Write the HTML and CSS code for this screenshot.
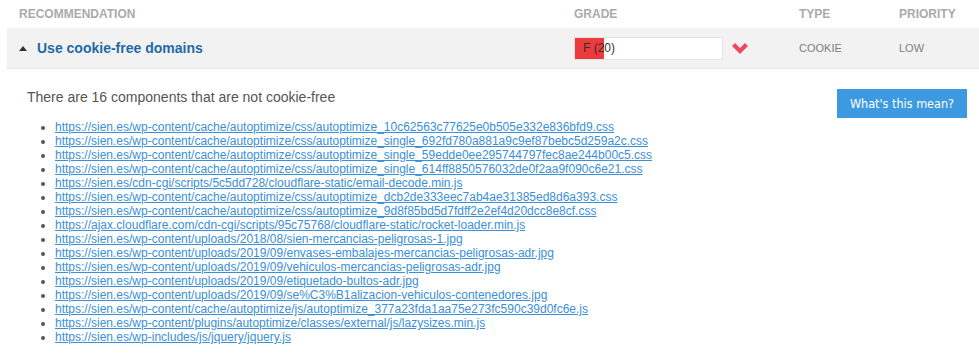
FILE: index.html
```html
<!DOCTYPE html>
<html lang="en">
<head>
  <meta charset="UTF-8" />
  <title>Recommendations</title>
  <link rel="stylesheet" href="styles.css">
</head>
<body>

<table class="recs">
  <thead>
    <tr>
      <th class="col-name">Recommendation</th>
      <th class="col-grade">Grade</th>
      <th class="col-type">Type</th>
      <th class="col-priority">Priority</th>
    </tr>
  </thead>
  <tbody>
    <tr class="rec-row">
      <td class="name-cell"><svg class="caret" width="8" height="5" viewBox="0 0 8 5"><path d="M0 5 L4 0 L8 5 Z" fill="#333"/></svg><span class="rec-title">Use cookie-free domains</span></td>
      <td>
        <div class="grade-wrap">
          <div class="grade-box">
            <div class="grade-fill" style="width: 20%"></div>
            <span class="grade-text">F (20)</span>
          </div>
          <svg class="chevron" width="16" height="11" viewBox="0 0 16 11">
            <path d="M0 3 L3 0 L8 5 L13 0 L16 3 L8 11 Z" fill="#ec4a60"/>
          </svg>
        </div>
      </td>
      <td class="small">COOKIE</td>
      <td class="small">LOW</td>
    </tr>
    <tr class="detail-row">
      <td colspan="4">
        <div class="detail">
          <div class="detail-head">
            <p class="summary">There are 16 components that are not cookie-free</p>
            <a class="btn" href="#">What's this mean?</a>
          </div>
          <ul class="links">
            <li><a href="#">https://sien.es/wp-content/cache/autoptimize/css/autoptimize_10c62563c77625e0b505e332e836bfd9.css</a></li>
            <li><a href="#">https://sien.es/wp-content/cache/autoptimize/css/autoptimize_single_692fd780a881a9c9ef87bebc5d259a2c.css</a></li>
            <li><a href="#">https://sien.es/wp-content/cache/autoptimize/css/autoptimize_single_59edde0ee295744797fec8ae244b00c5.css</a></li>
            <li><a href="#">https://sien.es/wp-content/cache/autoptimize/css/autoptimize_single_614ff8850576032de0f2aa9f090c6e21.css</a></li>
            <li><a href="#">https://sien.es/cdn-cgi/scripts/5c5dd728/cloudflare-static/email-decode.min.js</a></li>
            <li><a href="#">https://sien.es/wp-content/cache/autoptimize/css/autoptimize_dcb2de333eec7ab4ae31385ed8d6a393.css</a></li>
            <li><a href="#">https://sien.es/wp-content/cache/autoptimize/css/autoptimize_9d8f85bd5d7fdff2e2ef4d20dcc8e8cf.css</a></li>
            <li><a href="#">https://ajax.cloudflare.com/cdn-cgi/scripts/95c75768/cloudflare-static/rocket-loader.min.js</a></li>
            <li><a href="#">https://sien.es/wp-content/uploads/2018/08/sien-mercancias-peligrosas-1.jpg</a></li>
            <li><a href="#">https://sien.es/wp-content/uploads/2019/09/envases-embalajes-mercancias-peligrosas-adr.jpg</a></li>
            <li><a href="#">https://sien.es/wp-content/uploads/2019/09/vehiculos-mercancias-peligrosas-adr.jpg</a></li>
            <li><a href="#">https://sien.es/wp-content/uploads/2019/09/etiquetado-bultos-adr.jpg</a></li>
            <li><a href="#">https://sien.es/wp-content/uploads/2019/09/se%C3%B1alizacion-vehiculos-contenedores.jpg</a></li>
            <li><a href="#">https://sien.es/wp-content/cache/autoptimize/js/autoptimize_377a23fda1aa75e273fc590c39d0fc6e.js</a></li>
            <li><a href="#">https://sien.es/wp-content/plugins/autoptimize/classes/external/js/lazysizes.min.js</a></li>
            <li><a href="#">https://sien.es/wp-includes/js/jquery/jquery.js</a></li>
          </ul>
        </div>
      </td>
    </tr>
  </tbody>
</table>

</body>
</html>
```

FILE: styles.css
```css
body {
  margin: 0;
  font-family: "Liberation Sans", Arial, sans-serif;
  background-color: #fff;
  color: #555;
}

.recs {
  border-collapse: collapse;
  table-layout: fixed;
  margin-left: 7px;
  width: 972px;
}

.recs th {
  text-align: left;
  font-size: 12px;
  font-weight: bold;
  color: #aaa;
  text-transform: uppercase;
  height: 28px;
  padding: 0;
  vertical-align: middle;
}

.recs th.col-name {
  padding-left: 12px;
  width: 555px;
}

.col-grade {
  width: 225px;
}

.col-type {
  width: 100px;
}

.col-priority {
  width: 80px;
}

.rec-row td {
  background-color: #f2f2f2;
  height: 40px;
  padding: 0;
  vertical-align: middle;
  border-bottom: 1px solid #e6e6e6;
}

.caret {
  margin-left: 12px;
  margin-right: 10px;
  vertical-align: 2px;
}

.rec-title {
  font-size: 14px;
  font-weight: bold;
  color: #1f6aa5;
}

.grade-wrap {
  display: flex;
  align-items: center;
}

.grade-box {
  position: relative;
  width: 149px;
  height: 23px;
  background-color: #fff;
  border: 1px solid #e3e3e3;
  box-sizing: border-box;
  margin-right: 9px;
}

.grade-fill {
  position: absolute;
  left: 0;
  top: 0;
  bottom: 0;
  background-color: #ec3a3d;
}

.grade-text {
  position: relative;
  font-size: 12px;
  color: #333;
  line-height: 21px;
  padding-left: 8px;
}

.chevron {
  margin-top: 1px;
}

.small {
  font-size: 11px;
  color: #808080;
}

.detail-row td {
  padding: 0;
}

.detail {
  padding: 20px 12px 0 20px;
}

.detail-head {
  display: flex;
  justify-content: space-between;
  align-items: flex-start;
}

.summary {
  margin: 0;
  font-size: 14px;
  color: #555;
}

.btn {
  display: block;
  background-color: #3d9ae0;
  color: #fff;
  text-decoration: none;
  font-family: "DejaVu Sans Condensed", "Liberation Sans Narrow", sans-serif;
  font-size: 12.5px;
  width: 130px;
  height: 29px;
  line-height: 29px;
  text-align: center;
}

.links {
  margin: 2px 0 0 0;
  padding-left: 28px;
  font-size: 12px;
  line-height: 14px;
  color: #555;
}

.links a {
  color: #3a8fd8;
}
```
